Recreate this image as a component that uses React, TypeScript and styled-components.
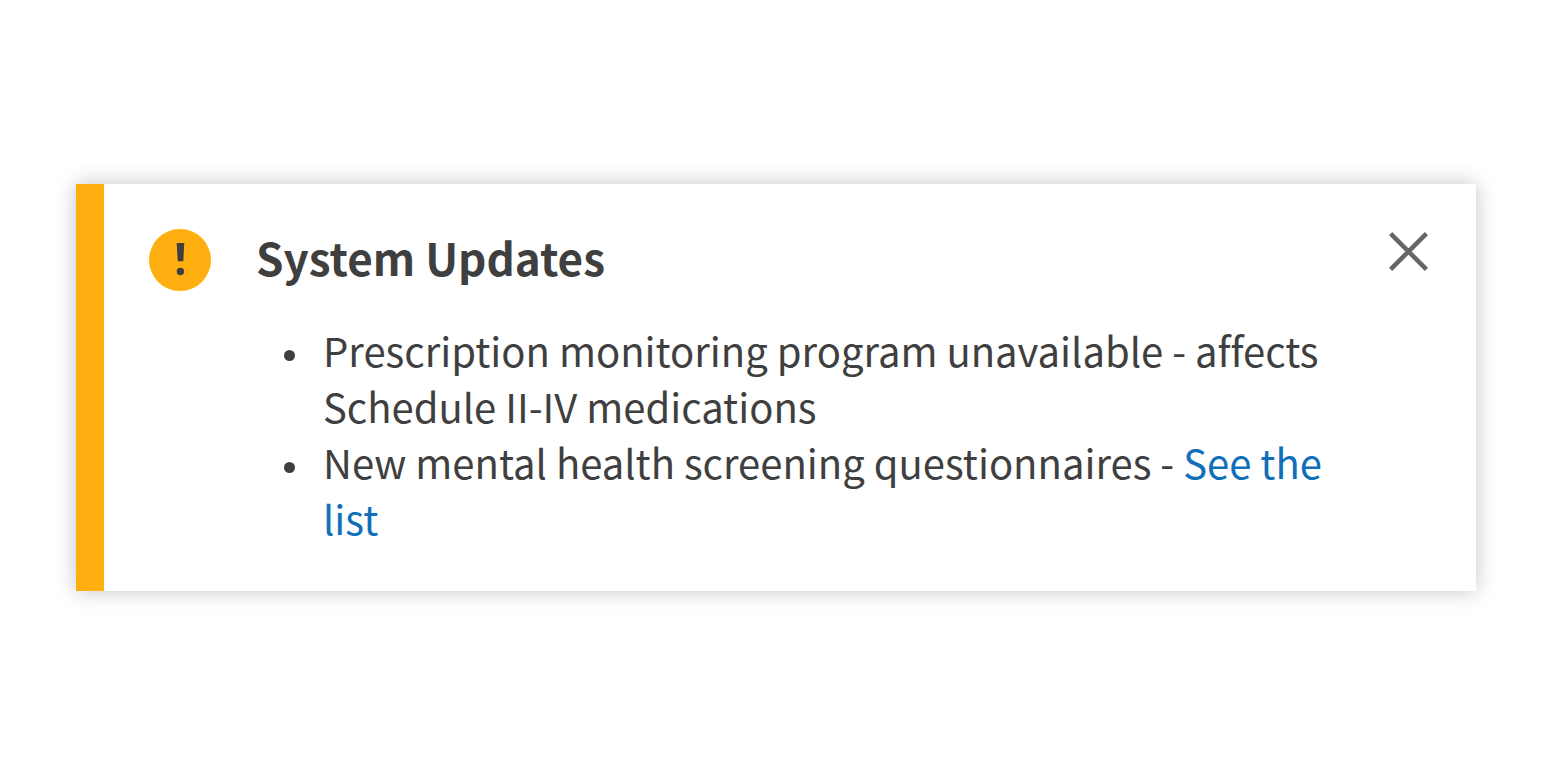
import React from "react";
import styled, { createGlobalStyle } from "styled-components";

const GlobalStyle = createGlobalStyle`
  * { box-sizing: border-box; }
  body {
    margin: 0;
    background: #ffffff;
    color: #3f3f3f;
    font-family: "Source Sans Pro", "Noto Sans CJK SC", sans-serif;
    font-variant-ligatures: none;
  }
`;

const Page = styled.main`
  min-height: 100vh;
  display: flex;
  align-items: center;
  padding: 0 72px 1px 76px;
`;

const Alert = styled.section`
  flex: 1;
  display: flex;
  align-items: flex-start;
  gap: 45px;
  padding: 45px 47px 45px 45px;
  border-left: 28px solid #ffaf0f;
  background: #ffffff;
  box-shadow: 0 0 20px rgba(0, 0, 0, 0.24);
`;

const StatusIcon = styled.svg`
  flex: none;
  width: 62px;
  height: 62px;
`;

const Content = styled.div`
  flex: 1;
  min-width: 0;
`;

const Title = styled.h2`
  margin: 0;
  font-size: 44px;
  font-weight: 700;
  line-height: 56px;
`;

const Updates = styled.ul`
  margin: 37px 0 0;
  padding: 0 0 0 28px;
  font-size: 40px;
  line-height: 56px;
  list-style: none;
`;

const Update = styled.li`
  display: flex;
  gap: 28px;

  &::before {
    content: "";
    flex: none;
    width: 11px;
    height: 11px;
    margin-top: 28px;
    border-radius: 50%;
    background: currentColor;
  }
`;

const TextLink = styled.a`
  color: #116fb9;
  text-decoration: none;
`;

const CloseButton = styled.button`
  flex: none;
  display: flex;
  margin: 2px 0 0;
  padding: 0;
  border: 0;
  background: none;
  color: #666666;
  cursor: pointer;
`;

export default function App() {
  return (
    <>
      <GlobalStyle />
      <Page>
        <Alert aria-labelledby="alert-title">
          <StatusIcon viewBox="0 0 62 62" aria-hidden="true">
            <circle cx="31" cy="31" r="31" fill="#ffaf0f" />
            <path d="M27.6 14h7.7l-1 18.200h-5.500z" fill="#3f3f3f" />
            <circle cx="31.4" cy="42.500" r="3.700" fill="#3f3f3f" />
          </StatusIcon>
          <Content>
            <Title id="alert-title">System Updates</Title>
            <Updates>
              <Update>
                <span>Prescription monitoring program unavailable - affects Schedule II-IV medications</span>
              </Update>
              <Update>
                <span>
                  New mental health screening questionnaires - <TextLink href="#list">See the list</TextLink>
                </span>
              </Update>
            </Updates>
          </Content>
          <CloseButton type="button" aria-label="Close">
            <svg width="41" height="41" viewBox="0 0 41 41" fill="none" stroke="currentColor" strokeWidth="4.500">
              <path d="M2.600 2.600l35.800 35.800M38.400 2.600L2.600 38.400" />
            </svg>
          </CloseButton>
        </Alert>
      </Page>
    </>
  );
}
